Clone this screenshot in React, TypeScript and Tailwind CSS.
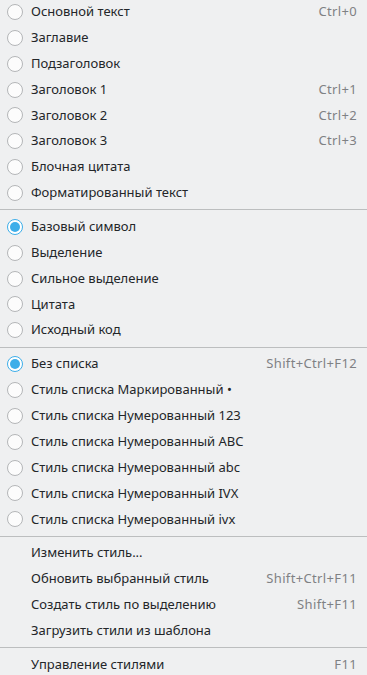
import React from 'react';

type Item = { label: string; shortcut?: string; radio?: boolean; checked?: boolean };

const sections: Item[][] = [
  [
    { label: 'Основной текст', shortcut: 'Ctrl+0', radio: true },
    { label: 'Заглавие', radio: true },
    { label: 'Подзаголовок', radio: true },
    { label: 'Заголовок 1', shortcut: 'Ctrl+1', radio: true },
    { label: 'Заголовок 2', shortcut: 'Ctrl+2', radio: true },
    { label: 'Заголовок 3', shortcut: 'Ctrl+3', radio: true },
    { label: 'Блочная цитата', radio: true },
    { label: 'Форматированный текст', radio: true },
  ],
  [
    { label: 'Базовый символ', radio: true, checked: true },
    { label: 'Выделение', radio: true },
    { label: 'Сильное выделение', radio: true },
    { label: 'Цитата', radio: true },
    { label: 'Исходный код', radio: true },
  ],
  [
    { label: 'Без списка', shortcut: 'Shift+Ctrl+F12', radio: true, checked: true },
    { label: 'Стиль списка Маркированный •', radio: true },
    { label: 'Стиль списка Нумерованный 123', radio: true },
    { label: 'Стиль списка Нумерованный ABC', radio: true },
    { label: 'Стиль списка Нумерованный abc', radio: true },
    { label: 'Стиль списка Нумерованный IVX', radio: true },
    { label: 'Стиль списка Нумерованный ivx', radio: true },
  ],
  [
    { label: 'Изменить стиль...' },
    { label: 'Обновить выбранный стиль', shortcut: 'Shift+Ctrl+F11' },
    { label: 'Создать стиль по выделению', shortcut: 'Shift+F11' },
    { label: 'Загрузить стили из шаблона' },
  ],
  [{ label: 'Управление стилями', shortcut: 'F11' }],
];

const Radio = ({ checked }: { checked?: boolean }) =>
  checked ? (
    <span className="w-4 h-4 rounded-full border border-[#3daee9] bg-white flex items-center justify-center">
      <span className="w-[10px] h-[10px] rounded-full bg-[#3daee9]" />
    </span>
  ) : (
    <span className="w-4 h-4 rounded-full border border-[#b4b6b8] bg-[#fcfcfc]" />
  );

export default function App() {
  return (
    <div
      className="w-[367px] h-[675px] overflow-hidden bg-[#eff0f1] text-[#232629] text-[13px]"
      style={{ fontFamily: '"Noto Sans", "DejaVu Sans", sans-serif' }}
    >
      <div className="-mt-px flex flex-col">
        {sections.map((sec, i) => (
          <div key={i}>
            {i > 0 && (
              <div className="h-2 flex items-center">
                <div className="w-full h-px bg-[#bcbebf]" />
              </div>
            )}
            {sec.map((it) => (
              <div key={it.label} className="h-[25.87px] flex items-center pl-[7px] pr-[10px]">
                <span className="w-4 h-4 flex items-center">{it.radio && <Radio checked={it.checked} />}</span>
                <span className="ml-2 flex-1 whitespace-nowrap">{it.label}</span>
                {it.shortcut && (
                  <span className="text-[#7f8184] whitespace-nowrap tracking-[0.35px]">{it.shortcut}</span>
                )}
              </div>
            ))}
          </div>
        ))}
      </div>
    </div>
  );
}
